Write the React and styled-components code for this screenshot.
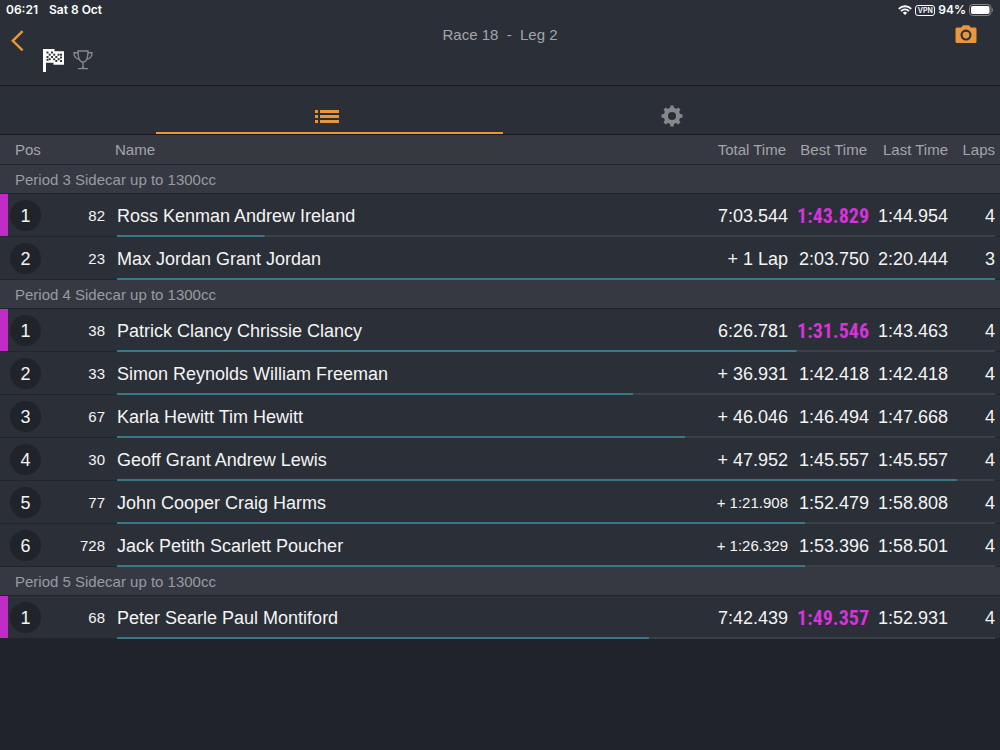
import React from "react";
import styled, { createGlobalStyle } from "styled-components";

const GlobalStyle = createGlobalStyle`
  * { box-sizing: border-box; }
  html, body { margin: 0; min-height: 100%; background: #20232b; }
  body {
    font-family: "Liberation Sans", Arial, sans-serif;
    color: #f4f4f5;
    overflow-x: hidden;
  }
`;

const Page = styled.div`
  min-height: 100vh;
  background: #20232b;
`;

const Top = styled.header`
  background: #2b2f37;
  border-bottom: 1px solid #17191e;
  height: 86px;
`;

const StatusBar = styled.div`
  display: flex;
  align-items: center;
  height: 20px;
  padding: 0 7px 0 6px;
  font: 600 12px/20px Inter, sans-serif;
  color: #fff;
`;

const StatusDate = styled.span`
  margin-left: 11px;
  flex: 1;
`;

const StatusIcons = styled.div`
  display: flex;
  align-items: center;
  gap: 3px;
`;

const Vpn = styled.span`
  border: 1px solid #fff;
  border-radius: 3px;
  width: 20px;
  height: 11px;
  font-size: 7px;
  line-height: 9px;
  text-align: center;
`;

const NavBar = styled.div`
  display: grid;
  grid-template-columns: minmax(0, 1fr) auto minmax(0, 1fr);
  align-items: start;
  padding: 0 10px;
`;

const NavLeft = styled.div`
  display: flex;
  align-items: flex-start;
`;

const IconButton = styled.button`
  display: block;
  border: 0;
  padding: 0;
  margin: 0;
  background: none;
  color: ${(p) => p.$color};
  line-height: 0;
  cursor: pointer;
`;

const BackButton = styled(IconButton)`
  padding-top: 10px;
`;

const CameraButton = styled(IconButton)`
  justify-self: end;
  padding: 5px 13px 0 0;
`;

const Modes = styled.div`
  display: flex;
  gap: 8px;
  padding: 28px 0 0 18px;
`;

const Title = styled.h1`
  margin: 0;
  padding-top: 5px;
  font-size: 15px;
  line-height: 20px;
  font-weight: 400;
  color: #a3a5ab;
  white-space: pre;
`;

const Tabs = styled.nav`
  display: flex;
  height: 49px;
  padding: 0 calc(50% - 344px);
  background: #2b2f37;
  border-bottom: 1px solid #17191e;
`;

const Tab = styled.button`
  flex: 1;
  position: relative;
  display: flex;
  justify-content: center;
  align-items: flex-start;
  border: 0;
  padding: 19px 0 0;
  background: none;
  color: ${(p) => (p.$active ? "#ea9637" : "#85878b")};
  cursor: pointer;

  &::after {
    content: "";
    display: ${(p) => (p.$active ? "block" : "none")};
    position: absolute;
    left: 0;
    right: -3px;
    bottom: 0;
    height: 2px;
    background: #ea9637;
  }
`;

const Table = styled.table`
  width: 100%;
  table-layout: fixed;
  border-collapse: collapse;
`;

const Col = styled.col`
  width: ${(p) => p.$w};
`;

const HeadRow = styled.tr`
  height: 30px;
  background: linear-gradient(#23262d, #23262d) left bottom / 100% 1px no-repeat #363941;
`;

const HeadCell = styled.th`
  padding: 0 ${(p) => p.$right || "0"} 0 ${(p) => p.$left || "0"};
  text-align: ${(p) => p.$align || "left"};
  font-size: 15px;
  line-height: 20px;
  font-weight: 400;
  color: #a3a5ab;
  white-space: nowrap;
`;

const GroupRow = styled.tr`
  height: 29px;
  background: linear-gradient(#22252c, #22252c) left bottom / 100% 1px no-repeat #363941;
`;

const GroupCell = styled(HeadCell)`
  font-size: 15px;
  color: #989ba2;
`;

const ResultRow = styled.tr`
  height: 43px;
  background:
    linear-gradient(${(p) => (p.$leader ? "#be2bc5" : "transparent")} 0 0) left top / 8px 42px no-repeat,
    linear-gradient(#3b7886 0 0) 117px 100% / calc((100% - 122px) * var(--gap)) 2px no-repeat,
    linear-gradient(#3c3f48 0 0) 117px 100% / calc(100% - 122px) 2px no-repeat,
    linear-gradient(#22252c 0 0) left bottom / 100% 1px no-repeat,
    #2b2f37;
`;

const Cell = styled.td`
  padding: 0 ${(p) => p.$right || "0"} 0 ${(p) => p.$left || "0"};
  text-align: ${(p) => p.$align || "right"};
  font-size: ${(p) => (p.$small ? "15px" : "18px")};
  line-height: 20px;
  white-space: nowrap;
`;

const BestCell = styled(Cell)`
  ${(p) =>
    p.$leader &&
    `font-family: "Roboto Condensed", "Liberation Sans", sans-serif;
     font-size: 20px;
     font-weight: 700;
     color: #d633da;`}
`;

const Position = styled.span`
  display: flex;
  align-items: center;
  justify-content: center;
  width: 31px;
  height: 31px;
  border-radius: 50%;
  background: #20232a;
`;

const groups = [
  {
    name: "Period 3 Sidecar up to 1300cc",
    rows: [
      ["82", "Ross Kenman Andrew Ireland", "7:03.544", "1:43.829", "1:44.954", 4, 0.168],
      ["23", "Max Jordan Grant Jordan", "+ 1 Lap", "2:03.750", "2:20.444", 3, 1],
    ],
  },
  {
    name: "Period 4 Sidecar up to 1300cc",
    rows: [
      ["38", "Patrick Clancy Chrissie Clancy", "6:26.781", "1:31.546", "1:43.463", 4, 0.774],
      ["33", "Simon Reynolds William Freeman", "+ 36.931", "1:42.418", "1:42.418", 4, 0.588],
      ["67", "Karla Hewitt Tim Hewitt", "+ 46.046", "1:46.494", "1:47.668", 4, 0.647],
      ["30", "Geoff Grant Andrew Lewis", "+ 47.952", "1:45.557", "1:45.557", 4, 0.957],
      ["77", "John Cooper Craig Harms", "+ 1:21.908", "1:52.479", "1:58.808", 4, 0.784],
      ["728", "Jack Petith Scarlett Poucher", "+ 1:26.329", "1:53.396", "1:58.501", 4, 0.784],
    ],
  },
  {
    name: "Period 5 Sidecar up to 1300cc",
    rows: [["68", "Peter Searle Paul Montiford", "7:42.439", "1:49.357", "1:52.931", 4, 0.606]],
  },
];

const WifiIcon = () => (
  <svg width="14" height="10" viewBox="0 0 14 10" fill="none" stroke="#fff" strokeWidth="1.8">
    <path d="M0.8 3.8a8.8 8.8 0 0 1 12.4 0" />
    <path d="M3 6.1a5.7 5.7 0 0 1 8 0" />
    <path d="M7 10L4.8 7.8a3.1 3.1 0 0 1 4.4 0z" fill="#fff" stroke="none" />
  </svg>
);

const BatteryIcon = () => (
  <svg width="24" height="12" viewBox="0 0 24 12">
    <rect x="0.5" y="0.5" width="21.5" height="11" rx="3.2" fill="none" stroke="#85878c" />
    <rect x="2" y="2" width="18.5" height="8" rx="1.8" fill="#fff" />
    <path d="M23 4v4c1.2-.5 1.2-3.500 0-4z" fill="#85878c" />
  </svg>
);

const ChevronIcon = () => (
  <svg width="15" height="22" viewBox="0 0 15 22" fill="none" stroke="currentColor" strokeWidth="2.4">
    <path d="M12.600 1.200L2.800 10.800l9.800 9.600" />
  </svg>
);

const squares = [
  [3.5, 3.5], [8, 3.5], [5.7, 5.7], [10.2, 5.7], [14.5, 5.7], [3.5, 8], [8, 8], [12.3, 8], [17, 5.7],
  [5.7, 10.2], [10.2, 10.2], [14.6, 10.2], [17, 8.500], [3.5, 10.8], [12.3, 12], [17, 12],
];

const FlagIcon = () => (
  <svg width="22" height="24" viewBox="0 0 22 24">
    <path d="M0 1h11.500v2.300H21v13.400H10.500v-2H3V24H0z" fill="#fff" />
    <g fill="#33363d">
      {squares.map(([x, y]) => (
        <rect key={`${x}-${y}`} x={x} y={y} width="2" height="2" />
      ))}
    </g>
  </svg>
);

const TrophyIcon = () => (
  <svg width="20" height="20" viewBox="0 0 20 20" fill="none" stroke="currentColor" strokeWidth="1.400">
    <path d="M5 1h10c0 6.500-1.500 11.200-5 11.200S5 7.500 5 1z" />
    <path d="M5.200 2.700H1c0 3.800 2 6.300 5.400 6.300M14.800 2.700H19c0 3.800-2 6.300-5.400 6.300" />
    <path d="M10 12.200v5.600M5 18.600h10" />
    <path d="M7.500 18c1.600 0 2.500-1 2.500-2.500 0 1.500.9 2.500 2.500 2.500z" fill="currentColor" stroke="none" />
  </svg>
);

const CameraIcon = () => (
  <svg width="22" height="19" viewBox="0 0 22 19">
    <path
      fill="currentColor"
      fillRule="evenodd"
      d="M2 2.500h4.300L7.800.600Q8.100.300 8.600.300h4.800q.5 0 .8.300l1.500 1.900H20q1.500 0 1.500 1.500v12.500q0 1.500-1.500 1.500H2q-1.500 0-1.500-1.500V4Q.5 2.500 2 2.500zM11 4.600a5.500 5.500 0 1 0 0 11 5.500 5.500 0 0 0 0-11zm0 2.100a3.400 3.400 0 1 1 0 6.800 3.400 3.400 0 0 1 0-6.800z"
    />
  </svg>
);

const ListIcon = () => (
  <svg width="26" height="24" viewBox="0 0 26 24" fill="currentColor">
    {[5, 10, 15].map((y) => (
      <g key={y}>
        <rect x="0" y={y} width="3" height="3" />
        <rect x="5" y={y} width="19" height="3" />
      </g>
    ))}
  </svg>
);

const GearIcon = () => (
  <svg width="22" height="22" viewBox="0 0 22 22">
    <g fill="currentColor">
      {[0, 45, 90, 135].map((a) => (
        <path key={a} d="M8.500 5L9.500.500h3L13.500 5v12l-1 4.500h-3L8.500 17z" transform={`rotate(${a} 11 11)`} />
      ))}
      <circle cx="11" cy="11" r="8.300" />
    </g>
    <circle cx="11" cy="11" r="4" fill="#2b2f37" />
  </svg>
);

export default function App() {
  return (
    <Page>
      <GlobalStyle />
      <Top>
        <StatusBar>
          <span>06:21</span>
          <StatusDate>Sat 8 Oct</StatusDate>
          <StatusIcons>
            <WifiIcon />
            <Vpn>VPN</Vpn>
            <span>94%</span>
            <BatteryIcon />
          </StatusIcons>
        </StatusBar>
        <NavBar>
          <NavLeft>
            <BackButton $color="#ea9637" aria-label="Back"><ChevronIcon /></BackButton>
            <Modes>
              <IconButton $color="#fff" aria-label="Race"><FlagIcon /></IconButton>
              <IconButton $color="#85878c" aria-label="Standings"><TrophyIcon /></IconButton>
            </Modes>
          </NavLeft>
          <Title>{"Race 18  -  Leg 2"}</Title>
          <CameraButton $color="#ea963c" aria-label="Camera"><CameraIcon /></CameraButton>
        </NavBar>
      </Top>
      <Tabs>
        <Tab $active aria-label="Results"><ListIcon /></Tab>
        <Tab aria-label="Settings"><GearIcon /></Tab>
      </Tabs>
      <Table>
        <colgroup>
          <Col $w="60px" />
          <Col $w="45px" />
          <Col $w="auto" />
          <Col $w="100px" />
          <Col $w="81px" />
          <Col $w="80px" />
          <Col $w="51px" />
        </colgroup>
        <thead>
          <HeadRow>
            <HeadCell scope="col" colSpan={2} $left="15px">Pos</HeadCell>
            <HeadCell scope="col" $left="10px">Name</HeadCell>
            <HeadCell scope="col" $align="right" $right="2px">Total Time</HeadCell>
            <HeadCell scope="col" $align="right" $right="2px">Best Time</HeadCell>
            <HeadCell scope="col" $align="right" $right="1px">Last Time</HeadCell>
            <HeadCell scope="col" $align="right" $right="5px">Laps</HeadCell>
          </HeadRow>
        </thead>
        {groups.map((group) => (
          <tbody key={group.name}>
            <GroupRow>
              <GroupCell scope="rowgroup" colSpan={7} $left="15px">{group.name}</GroupCell>
            </GroupRow>
            {group.rows.map(([num, name, total, best, last, laps, gap], i) => (
              <ResultRow key={num} $leader={i === 0} style={{ "--gap": gap }}>
                <Cell $left="10px"><Position>{i + 1}</Position></Cell>
                <Cell $small>{num}</Cell>
                <Cell $align="left" $left="12px">{name}</Cell>
                <Cell $small={total.length > 8}>{total}</Cell>
                <BestCell $leader={i === 0}>{best}</BestCell>
                <Cell $right="1px">{last}</Cell>
                <Cell $right="5px">{laps}</Cell>
              </ResultRow>
            ))}
          </tbody>
        ))}
      </Table>
    </Page>
  );
}
